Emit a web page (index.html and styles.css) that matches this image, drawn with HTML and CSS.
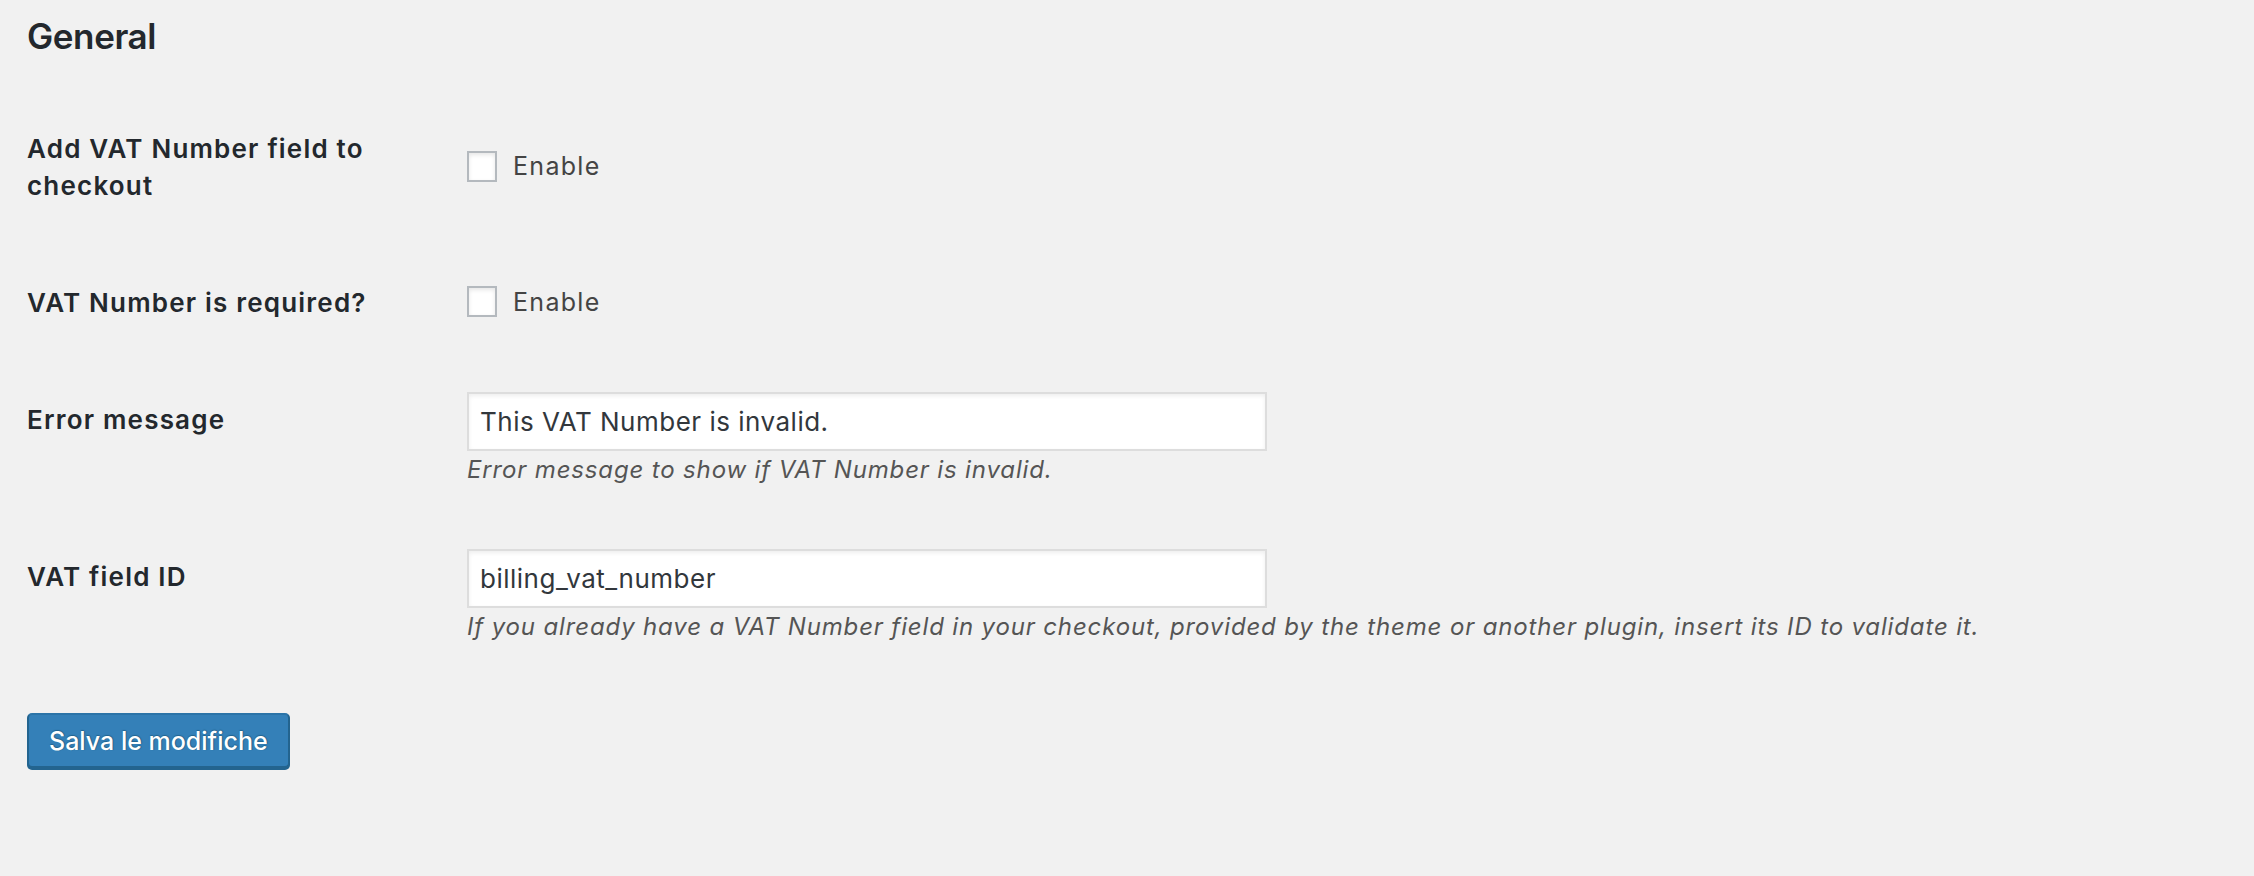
FILE: index.html
```html
<!DOCTYPE html>
<html lang="en">
<head>
<meta charset="utf-8">
<title>General settings</title>
<link rel="stylesheet" href="styles.css">
</head>
<body>
<div class="wrap">
  <h2 class="section-title">General</h2>
  <table class="form-table">
    <tbody>
      <tr>
        <th scope="row"><label for="add-vat">Add VAT Number field to checkout</label></th>
        <td>
          <label class="check" for="add-vat"><input type="checkbox" id="add-vat"><span>Enable</span></label>
        </td>
      </tr>
      <tr>
        <th scope="row"><label for="vat-required">VAT Number is required?</label></th>
        <td>
          <label class="check" for="vat-required"><input type="checkbox" id="vat-required"><span>Enable</span></label>
        </td>
      </tr>
      <tr class="field-row">
        <th scope="row"><label for="error-msg">Error message</label></th>
        <td>
          <input type="text" id="error-msg" class="regular-text" value="This VAT Number is invalid.">
          <p class="description">Error message to show if VAT Number is invalid.</p>
        </td>
      </tr>
      <tr class="field-row">
        <th scope="row"><label for="vat-field-id">VAT field ID</label></th>
        <td>
          <input type="text" id="vat-field-id" class="regular-text" value="billing_vat_number">
          <p class="description">If you already have a VAT Number field in your checkout, provided by the theme or another plugin, insert its ID to validate it.</p>
        </td>
      </tr>
    </tbody>
  </table>
  <p class="submit"><button type="submit" class="button-primary">Salva le modifiche</button></p>
</div>
</body>
</html>
```

FILE: styles.css
```css
html, body {
  margin: 0;
  padding: 0;
}

body {
  background: #f1f1f1;
  color: #444;
  font-family: "Inter", "Noto Sans", sans-serif;
  height: 876px;
  overflow: hidden;
}

.wrap {
  padding-left: 27px;
}

.section-title {
  margin: 14px 0 0;
  font-size: 35px;
  line-height: 44px;
  font-weight: 600;
  letter-spacing: -0.4px;
  color: #23282d;
}

.form-table {
  border-collapse: collapse;
  margin-top: 35px;
}

.form-table th {
  width: 440px;
  box-sizing: border-box;
  padding: 37px 20px 43px 0;
  vertical-align: top;
  text-align: left;
  font-size: 26px;
  line-height: 37px;
  font-weight: 600;
  letter-spacing: 1.2px;
  color: #23282d;
}

.form-table td {
  padding: 28px 0;
  vertical-align: middle;
}

.field-row td {
  vertical-align: top;
}

.check {
  display: flex;
  align-items: center;
  height: 36px;
  padding-bottom: 8px;
  font-size: 25px;
  letter-spacing: 1.3px;
  color: #444;
}

.check input {
  appearance: none;
  -webkit-appearance: none;
  margin: 0 16px 0 0;
  width: 30px;
  height: 31px;
  box-sizing: border-box;
  border: 2px solid #b4b9be;
  background: #fff;
  box-shadow: inset 0 2px 4px rgba(0, 0, 0, 0.1);
}

.regular-text {
  display: block;
  box-sizing: border-box;
  width: 800px;
  height: 59px;
  margin: 0;
  padding: 0 11px;
  border: 2px solid #ddd;
  background: #fff;
  box-shadow: inset 0 2px 4px rgba(0, 0, 0, 0.07);
  font-family: "Inter", "Noto Sans", sans-serif;
  font-size: 26px;
  letter-spacing: 0.5px;
  color: #32373c;
  outline: none;
}

.description {
  margin: 2px 0 6px;
  font-size: 24px;
  line-height: 34px;
  font-style: italic;
  letter-spacing: 0.85px;
  color: #555;
}

.submit {
  margin: 0;
  padding-top: 35px;
}

.button-primary {
  box-sizing: border-box;
  height: 55px;
  padding: 0 20px;
  border: 2px solid;
  border-color: #2b74a8 #23648f #23648f;
  border-radius: 5px;
  background: #3480b8;
  box-shadow: 0 2px 0 #23648f;
  color: #fff;
  font-family: "Inter", "Noto Sans", sans-serif;
  font-size: 25px;
  font-weight: 500;
  text-shadow: 0 -1px 1px #23648f, 1px 0 1px #23648f;
  cursor: pointer;
}
```
